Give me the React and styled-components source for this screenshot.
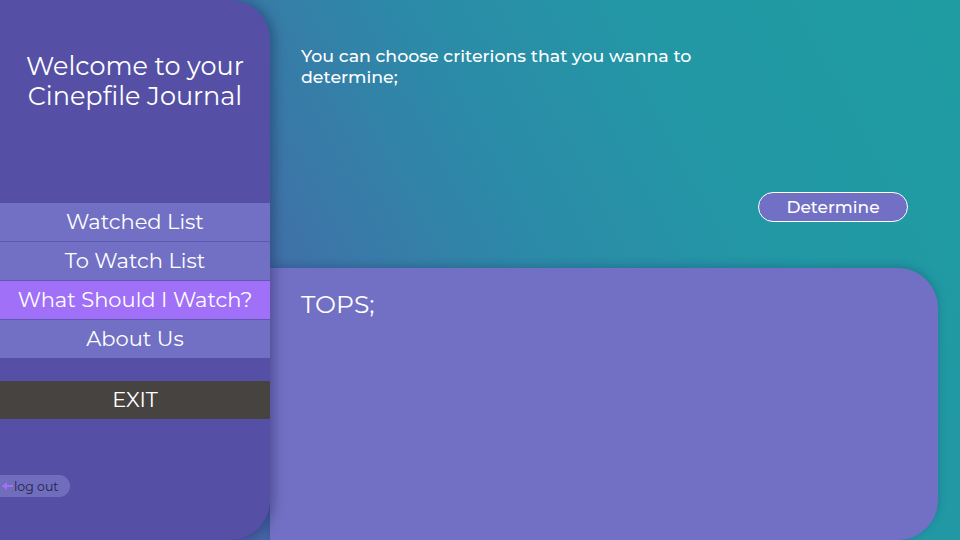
import React from 'react';
import styled, { createGlobalStyle } from 'styled-components';

const GlobalStyle = createGlobalStyle`
  html, body {
    margin: 0;
    padding: 0;
    width: 960px;
    height: 540px;
    overflow: hidden;
  }
  body {
    font-family: 'Montserrat', 'DejaVu Sans', 'Open Sans', sans-serif;
    color: white;
  }
`;

const Page = styled.div`
  width: 960px;
  height: 540px;
  display: grid;
  grid-template-columns: 270px 1fr;
  background: linear-gradient(62deg, #5252a8 0%, #3f72a8 35%, #2c8aa8 55%, #2298a5 75%, #1f9ca2 100%);
  overflow: hidden;
`;

const Sidebar = styled.aside`
  position: relative;
  z-index: 2;
  background-color: #5550a5;
  border-radius: 0 40px 40px 0;
  box-shadow: 4px 0 12px rgba(20, 20, 60, 0.35);
  display: flex;
  flex-direction: column;
  padding-top: 51px;
`;

const Title = styled.h1`
  margin: 0;
  font-size: 25.5px;
  font-weight: 400;
  line-height: 30px;
  text-align: center;
`;

const Menu = styled.ul`
  list-style: none;
  margin: 92px 0 0;
  padding: 0;
`;

const MenuItem = styled.li`
  height: 38px;
  line-height: 38px;
  border-bottom: 1px solid #5e59b0;
  background-color: ${(p) => (p.active ? '#a070f8' : '#7170c4')};
  text-align: center;
  font-size: 21px;
  &:last-child {
    border-bottom: none;
  }
`;

const ExitButton = styled.div`
  margin-top: 23px;
  height: 38px;
  line-height: 38px;
  background-color: #464340;
  text-align: center;
  font-size: 21px;
`;

const LogOut = styled.div`
  margin-top: 56px;
  margin-left: -6px;
  width: 76px;
  height: 22px;
  border-radius: 0 11px 11px 0;
  background-color: #716dbd;
  display: flex;
  align-items: center;
  padding-left: 8px;
  box-sizing: border-box;
  gap: 1px;
  font-size: 12.5px;
  color: #221f4e;
`;

const Main = styled.main`
  display: flex;
  flex-direction: column;
  padding-right: 22px;
`;

const Criteria = styled.section`
  height: 268px;
  box-sizing: border-box;
  padding: 45px 30px 0 31px;
  display: flex;
  flex-direction: column;
`;

const Intro = styled.p`
  margin: 0;
  width: 420px;
  font-size: 17.4px;
  font-weight: 500;
  line-height: 21px;
`;

const DetermineButton = styled.button`
  align-self: flex-end;
  margin-top: 105px;
  width: 150px;
  height: 30px;
  border-radius: 15px;
  border: 1px solid white;
  background-color: #7170c4;
  color: white;
  font-family: inherit;
  font-size: 17px;
  font-weight: 500;
  padding: 0;
`;

const TopsPanel = styled.section`
  flex: 1;
  background-color: #7170c4;
  border-radius: 0 40px 40px 0;
  box-shadow: 0 -2px 8px rgba(20, 30, 80, 0.25);
  padding: 21px 31px;
`;

const TopsTitle = styled.h2`
  margin: 0;
  font-size: 25px;
  font-weight: 400;
`;

export default function App() {
  return (
    <>
      <GlobalStyle />
      <Page>
        <Sidebar>
          <Title>
            Welcome to your
            <br />
            Cinepfile Journal
          </Title>
          <Menu>
            <MenuItem>Watched List</MenuItem>
            <MenuItem>To Watch List</MenuItem>
            <MenuItem active>What Should I Watch?</MenuItem>
            <MenuItem>About Us</MenuItem>
          </Menu>
          <ExitButton>EXIT</ExitButton>
          <LogOut>
            <svg width="11" height="10" viewBox="0 0 11 10">
              <path d="M0 5 L5 1 L5 4 L11 4 L11 6 L5 6 L5 9 Z" fill="#a070f8" />
            </svg>
            log out
          </LogOut>
        </Sidebar>
        <Main>
          <Criteria>
            <Intro>You can choose criterions that you wanna to determine;</Intro>
            <DetermineButton>Determine</DetermineButton>
          </Criteria>
          <TopsPanel>
            <TopsTitle>TOPS;</TopsTitle>
          </TopsPanel>
        </Main>
      </Page>
    </>
  );
}
